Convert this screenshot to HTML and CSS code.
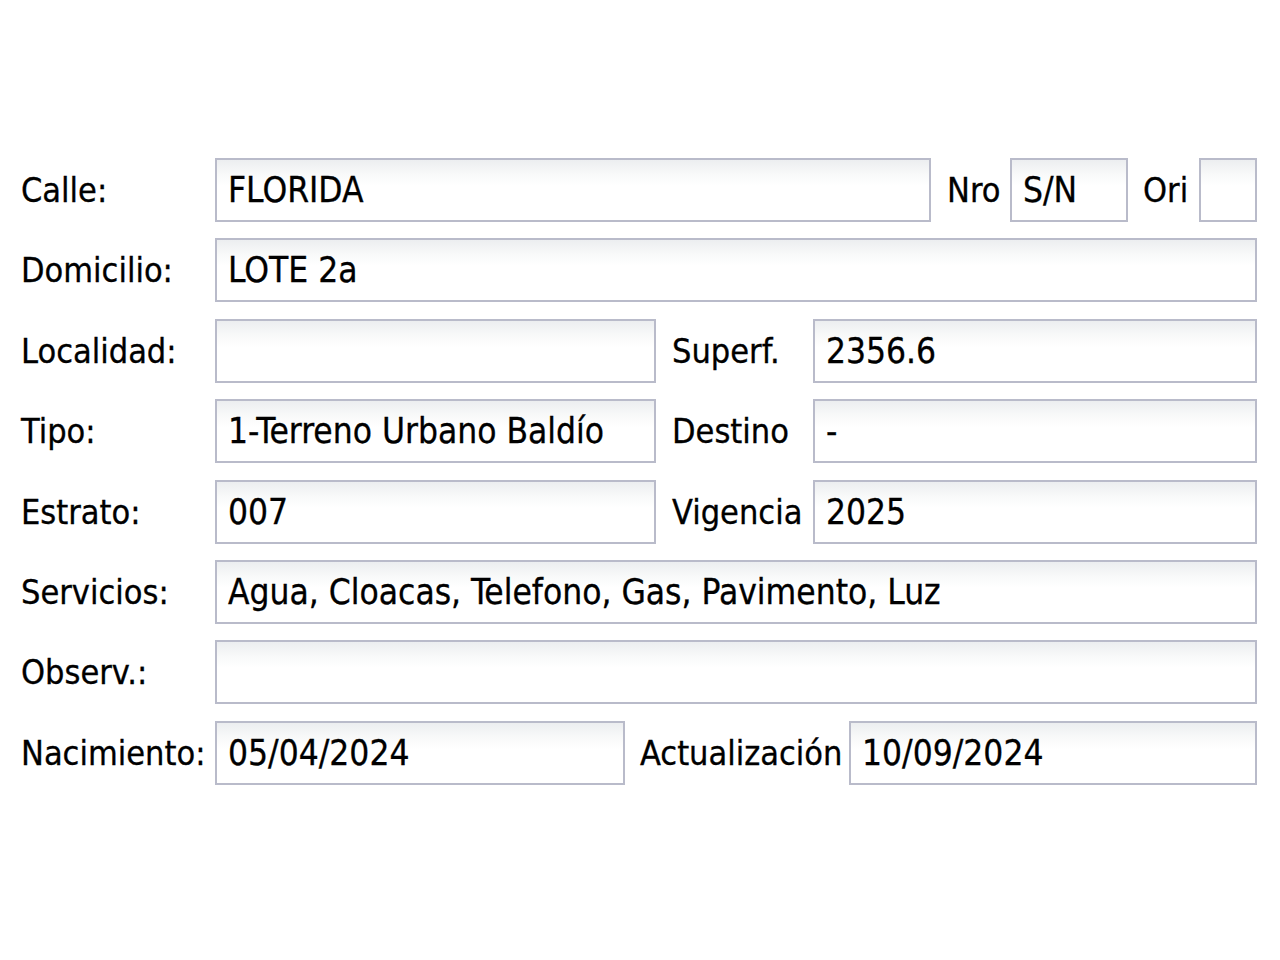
FILE: index.html
```html
<!DOCTYPE html>
<html lang="es">
<head>
  <meta charset="UTF-8">
  <title>Datos del inmueble</title>
  <link rel="stylesheet" href="styles.css">
</head>
<body>

  <div class="form">
    <div class="row">
      <div class="label">Calle:</div>
      <div class="field calle">FLORIDA</div>
      <div class="label-inline nro">Nro</div>
      <div class="field nro-field">S/N</div>
      <div class="label-inline ori">Ori</div>
      <div class="field ori-field"></div>
    </div>

    <div class="row">
      <div class="label">Domicilio:</div>
      <div class="field grow">LOTE 2a</div>
    </div>

    <div class="row">
      <div class="label">Localidad:</div>
      <div class="field half"></div>
      <div class="label-mid">Superf.</div>
      <div class="field grow">2356.6</div>
    </div>

    <div class="row">
      <div class="label">Tipo:</div>
      <div class="field half">1-Terreno Urbano Baldío</div>
      <div class="label-mid">Destino</div>
      <div class="field grow">-</div>
    </div>

    <div class="row">
      <div class="label">Estrato:</div>
      <div class="field half">007</div>
      <div class="label-mid">Vigencia</div>
      <div class="field grow">2025</div>
    </div>

    <div class="row">
      <div class="label">Servicios:</div>
      <div class="field grow">Agua, Cloacas, Telefono, Gas, Pavimento, Luz</div>
    </div>

    <div class="row">
      <div class="label">Observ.:</div>
      <div class="field grow"></div>
    </div>

    <div class="row">
      <div class="label">Nacimiento:</div>
      <div class="field date">05/04/2024</div>
      <div class="label-date">Actualización</div>
      <div class="field grow">10/09/2024</div>
    </div>
  </div>

</body>
</html>
```

FILE: styles.css
```css
body {
  margin: 0;
  background: #ffffff;
  color: #000000;
  font-family: "DejaVu Sans Condensed", "DejaVu Sans", sans-serif;
  font-size: 34px;
  -webkit-text-stroke: 0.3px #000000;
}

.form {
  display: flex;
  flex-direction: column;
  gap: 16.4px;
  padding: 158px 23px 0 21px;
}

.row {
  display: flex;
  height: 64px;
}

.label {
  width: 194px;
  flex: none;
  padding-top: 12px;
  line-height: 40px;
  white-space: nowrap;
}

.label-inline,
.label-mid,
.label-date {
  flex: none;
  padding-top: 12px;
  line-height: 40px;
  white-space: nowrap;
}

.field {
  box-sizing: border-box;
  height: 64px;
  padding: 10px 10px 0 11px;
  font-size: 35px;
  line-height: 40px;
  border: 2px solid #b9bbca;
  background: linear-gradient(to bottom, #eceef0 0px, #f8f9f9 14px, #ffffff 26px);
  white-space: nowrap;
  overflow: hidden;
}

.grow {
  flex: 1;
}

.calle {
  width: 716px;
  flex: none;
}

.nro {
  margin-left: 16px;
  width: 63px;
}

.nro-field {
  width: 118px;
  flex: none;
}

.ori {
  margin-left: 15px;
  width: 56px;
}

.ori-field {
  flex: 1;
}

.half {
  width: 441px;
  flex: none;
}

.label-mid {
  margin-left: 16px;
  width: 141px;
}

.date {
  width: 410px;
  flex: none;
}

.label-date {
  margin-left: 15px;
  width: 209px;
}
```
